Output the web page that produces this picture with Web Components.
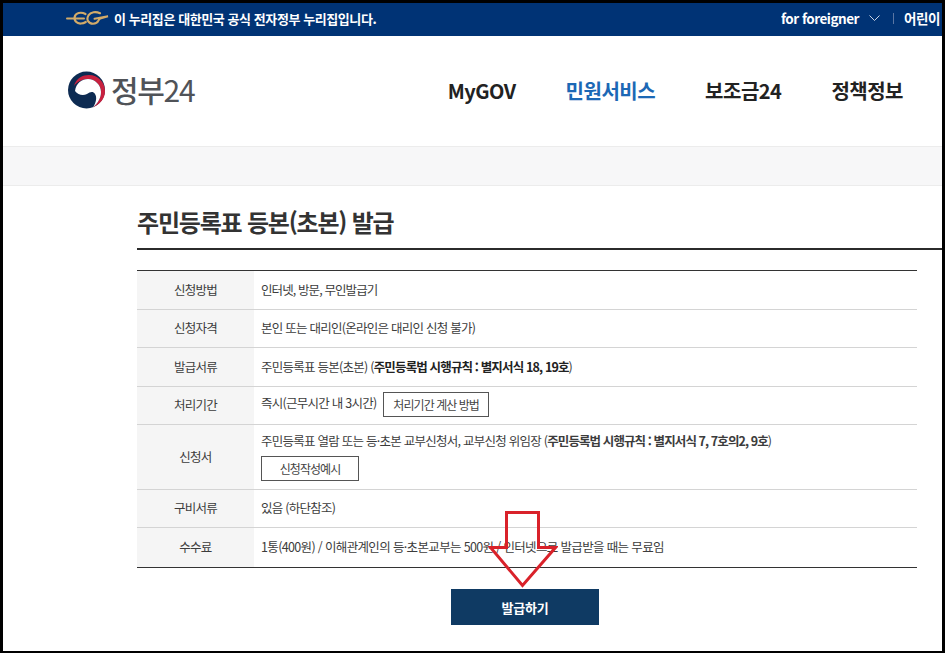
<!DOCTYPE html>
<html lang="ko">

<head>
    <meta charset="UTF-8">
    <title>주민등록표 등본(초본) 발급</title>
    <style type="text/css">
        html, body {
            margin: 0;
            background: #fff;
            font-family: "Noto Sans CJK KR", "Noto Sans", sans-serif;
        }
    </style>
</head>

<body>
    <page-frame>
        <gov-banner></gov-banner>
        <gov-header></gov-header>
        <page-band></page-band>
        <detail-section heading="주민등록표 등본(초본) 발급">
            <info-row label="신청방법" height="38" style="letter-spacing:-.9px">인터넷, 방문, 무인발급기</info-row>
            <info-row label="신청자격" height="37">본인 또는 대리인(온라인은 대리인 신청 불가)</info-row>
            <info-row label="발급서류" height="38">주민등록표 등본(초본) (<b style="letter-spacing:-.85px">주민등록법 시행규칙 : 별지서식 18, 19호</b>)</info-row>
            <info-row label="처리기간" height="37">즉시(근무시간 내 3시간) <outline-btn>처리기간 계산 방법</outline-btn></info-row>
            <info-row label="신청서" height="64" stacked>
                <div>주민등록표 열람 또는 등·초본 교부신청서, 교부신청 위임장 (<b style="letter-spacing:-.9px">주민등록법 시행규칙 : 별지서식 7, 7호의2, 9호</b>)</div>
                <outline-btn wide>신청작성예시</outline-btn>
            </info-row>
            <info-row label="구비서류" height="37">있음 (하단참조)</info-row>
            <info-row label="수수료" height="39" last style="letter-spacing:-.65px">1통(400원) / 이해관계인의 등·초본교부는 500원 / 인터넷으로 발급받을 때는 무료임</info-row>
        </detail-section>
        <issue-button>발급하기</issue-button>
        <red-arrow></red-arrow>
    </page-frame>

    <script type="text/javascript">
        // 그림자 DOM 공통 처리
        class BaseEl extends HTMLElement {
            constructor() {
                super();
                this.attachShadow({ mode: "open" });
            }
            render(html) {
                this.shadowRoot.innerHTML = html;
            }
        }

        // 바깥 검은 테두리 (캡처 원본의 테두리)
        class PageFrame extends BaseEl {
            connectedCallback() {
                this.render(`
                    <style>
                        :host {
                            display: block;
                            position: relative;
                            box-sizing: border-box;
                            width: 945px;
                            height: 653px;
                            border: solid #000;
                            border-width: 3px 3px 2px 3px;
                            overflow: hidden;
                        }
                    </style>
                    <slot></slot>
                `);
            }
        }

        // 상단 누리집 안내 띠
        class GovBanner extends BaseEl {
            connectedCallback() {
                this.render(`
                    <style>
                        :host {
                            display: flex;
                            align-items: center;
                            box-sizing: border-box;
                            height: 33px;
                            padding: 0 0 3px 63px;
                            background: #003375;
                            color: #fff;
                            font-size: 13px;
                            font-weight: 700;
                            letter-spacing: -0.42px;
                            white-space: nowrap;
                        }
                        svg { width: 43px; height: 14px; margin-right: 5px; flex: none; }
                        .notice { flex: 1; }
                        .right { display: flex; align-items: center; width: 161px; flex: none; overflow: hidden; font-size: 13.5px; }
                        .foreign { letter-spacing: -0.5px; }
                        svg.chev { width: 11px; height: 6px; margin: 0 0 0 10px; flex: none; }
                        .sep { width: 1px; height: 11px; background: #5a76a3; margin: 0 10px 0 13px; flex: none; }
                    </style>
                    <svg viewBox="0 0 43 14" fill="none" stroke="#d2ab69" stroke-linecap="round">
                        <path d="M1 7.500H18" stroke-width="2"/>
                        <path d="M19.500 3C15 .6 9.500 1.800 8.700 5.800 7.800 10 11 12.800 15 12.500 17 12.400 18.500 11.800 19.800 11" stroke-width="2.200"/>
                        <path d="M34 2.200C30 .4 24.600 .8 22.400 4.400 20 8.600 22.400 12.700 27 12.700 29.600 12.700 31.600 11.400 32.400 9.600 33 8.200 33.400 7.600 35 7.200L42 5.200 28.600 7.800" stroke-width="2.100"/>
                    </svg>
                    <span class="notice">이 누리집은 대한민국 공식 전자정부 누리집입니다.</span>
                    <div class="right">
                        <span class="foreign">for foreigner</span>
                        <svg class="chev" viewBox="0 0 11 6" fill="none" stroke="#c9d3e3" stroke-width="1"><path d="M.5 .5 5.500 5.500 10.500 .5"/></svg>
                        <i class="sep"></i>
                        <span>어린이</span>
                    </div>
                `);
            }
        }

        // 로고와 주 메뉴
        class GovHeader extends BaseEl {
            connectedCallback() {
                const menu = ["MyGOV", "민원서비스", "보조금24", "정책정보"];
                this.render(`
                    <style>
                        :host {
                            display: flex;
                            align-items: center;
                            justify-content: space-between;
                            box-sizing: border-box;
                            height: 110px;
                            padding: 0 39px 2px 65px;
                            background: #fff;
                        }
                        .logo { display: flex; align-items: center; gap: 5px; color: #505358; font-size: 30px; letter-spacing: -1.3px; }
                        .logo b { font-weight: 500; }
                        .logo span { margin-bottom: 2px; }
                        svg { width: 38px; height: 38px; flex: none; }
                        nav { display: flex; gap: 50px; font-size: 20px; font-weight: 700; color: #222; letter-spacing: -0.5px; }
                        .on { color: #1c68b5; }
                    </style>
                    <div class="logo">
                        <svg viewBox="0 0 38 38">
                            <circle cx="18.500" cy="19" r="18.500" fill="#0d2b52"/>
                            <path d="M6 15C8 7 15 4 21 4 30 4 37 11 37 20 37 28 32 33 25 36.500 30 32 33 27 33 21 33 14 27 8 20 8 14 8 9 11 6 15Z" fill="#c8213f"/>
                            <path d="M7 20C8 12 14 8 20 8 27 8 33 14 33 21 33 27 30 32 25 36.500 28.500 31 29 26 27 23 25 20 22 21 19 23 15 25 10 24 7 20Z" fill="#fff"/>
                        </svg>
                        <span><b>정부</b>24</span>
                    </div>
                    <nav>${menu.map((m, i) => `<span class="${i === 1 ? "on" : ""}">${m}</span>`).join("")}</nav>
                `);
            }
        }

        // 회색 띠
        class PageBand extends BaseEl {
            connectedCallback() {
                this.render(`
                    <style>
                        :host {
                            display: block;
                            box-sizing: border-box;
                            height: 40px;
                            background: #f7f7f8;
                            border-top: 1px solid #ececec;
                            border-bottom: 1px solid #ececec;
                        }
                    </style>
                `);
            }
        }

        // 제목과 표
        class DetailSection extends BaseEl {
            connectedCallback() {
                this.render(`
                    <style>
                        :host { display: block; margin-left: 134px; }
                        h1 {
                            box-sizing: border-box;
                            height: 64px;
                            margin: 0 0 20px;
                            padding-top: 18px;
                            border-bottom: 2px solid #2b2b2b;
                            font-size: 24px;
                            line-height: 36px;
                            font-weight: 700;
                            color: #333;
                            letter-spacing: -1.2px;
                        }
                        .rows { width: 780px; border-top: 1px solid #333; }
                    </style>
                    <h1>${this.getAttribute("heading")}</h1>
                    <div class="rows"><slot></slot></div>
                `);
            }
        }

        // 표의 한 줄
        class InfoRow extends BaseEl {
            connectedCallback() {
                const stacked = this.hasAttribute("stacked");
                this.render(`
                    <style>
                        :host {
                            display: grid;
                            grid-template-columns: 117px 1fr;
                            height: ${this.getAttribute("height")}px;
                            border-bottom: 1px solid ${this.hasAttribute("last") ? "#333" : "#d4d4d4"};
                            font-size: 12.5px;
                            color: #3c3c3c;
                            letter-spacing: -0.75px;
                        }
                        .label {
                            display: flex;
                            align-items: center;
                            justify-content: center;
                            box-sizing: border-box;
                            padding-bottom: 2px;
                            background: #f5f5f5;
                            letter-spacing: -0.75px;
                        }
                        .value {
                            display: flex;
                            align-items: ${stacked ? "flex-start" : "center"};
                            box-sizing: border-box;
                            padding: ${stacked ? "6px 0 0 7px" : "0 0 2px 7px"};
                        }
                        .stack { display: flex; flex-direction: column; align-items: flex-start; gap: 6px; }
                        ::slotted(b) { color: #222; letter-spacing: -0.95px; }
                    </style>
                    <div class="label">${this.getAttribute("label")}</div>
                    <div class="value"><div class="${stacked ? "stack" : ""}"><slot></slot></div></div>
                `);
            }
        }

        // 테두리 버튼
        class OutlineBtn extends BaseEl {
            connectedCallback() {
                const wide = this.hasAttribute("wide");
                this.render(`
                    <style>
                        :host {
                            display: inline-flex;
                            align-items: center;
                            justify-content: center;
                            box-sizing: border-box;
                            width: ${wide ? 98 : 106}px;
                            height: 25px;
                            margin-left: ${wide ? 0 : 4}px;
                            padding-bottom: 1px;
                            border: 1px solid #555;
                            background: #fff;
                            color: #444;
                            font-size: 12px;
                            letter-spacing: -0.95px;
                            vertical-align: middle;
                        }
                    </style>
                    <slot></slot>
                `);
            }
        }

        // 발급하기 버튼
        class IssueButton extends BaseEl {
            connectedCallback() {
                this.render(`
                    <style>
                        :host {
                            display: flex;
                            align-items: center;
                            justify-content: center;
                            box-sizing: border-box;
                            width: 148px;
                            height: 36px;
                            margin: 21px 0 0 448px;
                            background: #0f3a63;
                            color: #fff;
                            font-size: 13px;
                            font-weight: 700;
                            letter-spacing: -0.25px;
                        }
                    </style>
                    <slot></slot>
                `);
            }
        }

        // 표 위에 그려진 빨간 화살표
        class RedArrow extends BaseEl {
            connectedCallback() {
                this.render(`
                    <style>
                        :host { position: absolute; left: 485px; top: 505px; width: 70px; height: 82px; pointer-events: none; }
                        svg { display: block; }
                    </style>
                    <svg width="70" height="82" viewBox="0 0 70 82" fill="none" stroke="#d9222a" stroke-width="3">
                        <path d="M18.500 4.500H50.500V39.500H67.500L34.500 77.500 2.500 39.500H18.500Z"/>
                    </svg>
                `);
            }
        }

        customElements.define("page-frame", PageFrame);
        customElements.define("gov-banner", GovBanner);
        customElements.define("gov-header", GovHeader);
        customElements.define("page-band", PageBand);
        customElements.define("detail-section", DetailSection);
        customElements.define("info-row", InfoRow);
        customElements.define("outline-btn", OutlineBtn);
        customElements.define("issue-button", IssueButton);
        customElements.define("red-arrow", RedArrow);
    </script>

</body>

</html>
